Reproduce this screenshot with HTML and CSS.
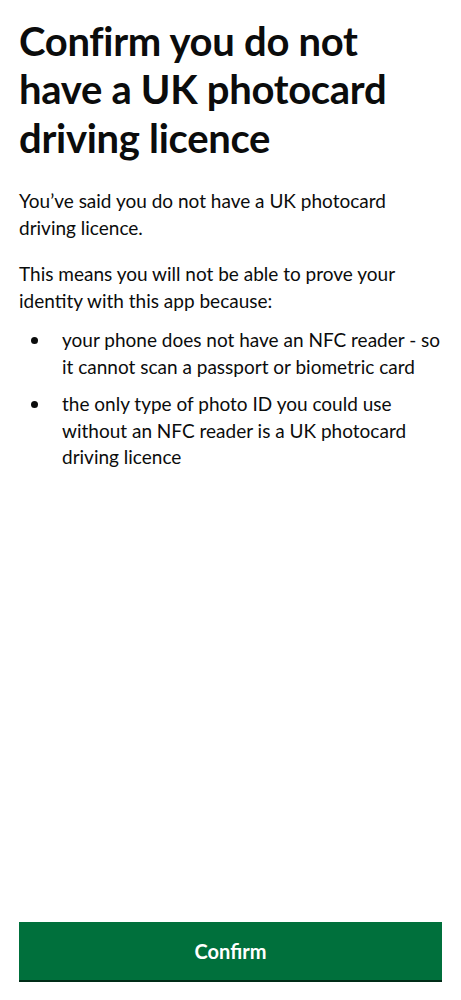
FILE: index.html
```html
<!DOCTYPE html>
<html lang="en">
<head>
<meta charset="utf-8">
<link rel="stylesheet" href="styles.css">
</head>
<body>
<main class="screen">
  <div class="content">
    <h1 class="title">Confirm you do not have a UK photocard driving licence</h1>
    <p class="body">You’ve said you do not have a UK photocard driving licence.</p>
    <p class="body body-second">This means you will not be able to prove your identity with this app because:</p>
    <ul class="list">
      <li class="item">your phone does not have an NFC reader - so it cannot scan a passport or biometric card</li>
      <li class="item">the only type of photo ID you could use without an NFC reader is a UK photocard driving licence</li>
    </ul>
  </div>
  <div class="footer">
    <button class="btn">Confirm</button>
  </div>
</main>
</body>
</html>
```
FILE: styles.css
```css
html, body {
  margin: 0;
  padding: 0;
  background: #ffffff;
}
.screen {
  height: 1000px;
  box-sizing: border-box;
  padding: 0 19px;
  display: flex;
  flex-direction: column;
  font-family: Lato, "Liberation Sans", sans-serif;
  color: #0b0c0c;
}
.content {
  flex: 1;
}
.title {
  margin: 16.5px 0 0;
  font-size: 40px;
  line-height: 48.5px;
  font-weight: 700;
  letter-spacing: -0.3px;
}
.body {
  margin: 26.4px 0 0;
  font-size: 19px;
  line-height: 26.5px;
}
.body-second {
  margin-top: 20px;
}
.list {
  list-style: none;
  margin: 13px 0 0;
  padding: 0;
  font-size: 19px;
  line-height: 26.5px;
}
.item {
  position: relative;
  padding-left: 43px;
}
.item::before {
  content: "";
  position: absolute;
  left: 12px;
  top: 10px;
  width: 7px;
  height: 7px;
  border-radius: 50%;
  background: #0b0c0c;
}
.item + .item {
  margin-top: 11px;
}
.footer {
  padding-bottom: 20px;
}
.btn {
  display: block;
  width: 100%;
  height: 58px;
  border: 0;
  border-radius: 0;
  background: #00703c;
  box-shadow: 0 2px 0 #002d18;
  color: #ffffff;
  font-family: inherit;
  font-size: 20px;
  font-weight: 700;
  padding: 0;
}
```
